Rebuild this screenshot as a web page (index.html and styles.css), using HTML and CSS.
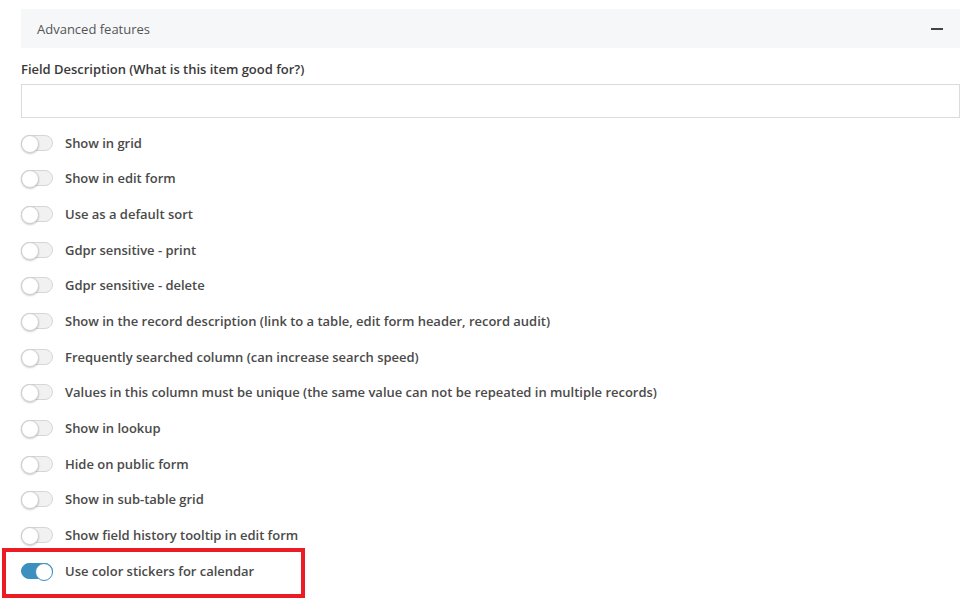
FILE: index.html
```html
<!DOCTYPE html>
<html>
<head>
<meta charset="utf-8">
<link rel="stylesheet" href="styles.css">
</head>
<body>
<div class="page">
  <div class="panel-head">
    <span class="panel-title">Advanced features</span>
    <span class="minus"></span>
  </div>
  <div class="field-label">Field Description (What is this item good for?)</div>
  <div class="input"></div>
  <div class="toggles">
    <div class="row"><span class="switch"></span><span class="label">Show in grid</span></div>
    <div class="row"><span class="switch"></span><span class="label">Show in edit form</span></div>
    <div class="row"><span class="switch"></span><span class="label">Use as a default sort</span></div>
    <div class="row"><span class="switch"></span><span class="label">Gdpr sensitive - print</span></div>
    <div class="row"><span class="switch"></span><span class="label">Gdpr sensitive - delete</span></div>
    <div class="row"><span class="switch"></span><span class="label">Show in the record description (link to a table, edit form header, record audit)</span></div>
    <div class="row"><span class="switch"></span><span class="label">Frequently searched column (can increase search speed)</span></div>
    <div class="row"><span class="switch"></span><span class="label">Values in this column must be unique (the same value can not be repeated in multiple records)</span></div>
    <div class="row"><span class="switch"></span><span class="label">Show in lookup</span></div>
    <div class="row"><span class="switch"></span><span class="label">Hide on public form</span></div>
    <div class="row"><span class="switch"></span><span class="label">Show in sub-table grid</span></div>
    <div class="row"><span class="switch"></span><span class="label">Show field history tooltip in edit form</span></div>
    <div class="row highlighted"><span class="switch on"></span><span class="label">Use color stickers for calendar</span><span class="red-box"></span></div>
  </div>
</div>
</body>
</html>
```
FILE: styles.css
```css
* { box-sizing: border-box; }
html, body { margin: 0; padding: 0; background: #fff; }
body {
  font-family: "Open Sans", "Liberation Sans", sans-serif;
  font-size: 13px;
  color: #444;
  width: 973px;
  height: 601px;
  overflow: hidden;
}
.page {
  padding: 9px 13px 0 21px;
}
.panel-head {
  height: 39px;
  background: #f6f7f9;
  display: flex;
  align-items: center;
  justify-content: space-between;
  padding: 0 17px 0 16px;
}
.panel-title {
  color: #555;
  font-size: 13px;
}
.minus {
  width: 12px;
  height: 2px;
  background: #444;
  margin-top: 1px;
}
.field-label {
  margin-top: 11px;
  font-weight: 600;
  color: #3a3a3a;
  line-height: 20px;
  letter-spacing: -0.02px;
}
.input {
  margin-top: 5px;
  width: 939px;
  height: 34px;
  border: 1px solid #d8dcdf;
  background: #fff;
}
.toggles {
  margin-top: 7px;
  display: flex;
  flex-direction: column;
}
.row {
  height: 35.67px;
  display: flex;
  align-items: center;
  position: relative;
}
.switch {
  position: relative;
  width: 32px;
  height: 16px;
  border-radius: 8px;
  border: 1px solid #d6d6d6;
  background: #f1f1f1;
  flex: none;
}
.switch::after {
  content: "";
  position: absolute;
  left: -1px;
  top: -1px;
  width: 16px;
  height: 16px;
  border-radius: 50%;
  background: #fff;
  border: 1px solid #cfcfcf;
  box-shadow: 0 1px 2px rgba(0,0,0,0.2);
}
.switch.on {
  background: #3d8fbf;
  border-color: #3d8fbf;
}
.switch.on::after {
  left: auto;
  right: -1px;
  border-color: #3d8fbf;
  box-shadow: none;
}
.label {
  margin-left: 12px;
  font-weight: 600;
  color: #4a4a4a;
  white-space: nowrap;
  letter-spacing: -0.02px;
}
.red-box {
  position: absolute;
  left: -19px;
  top: -5px;
  width: 303px;
  height: 50px;
  border: 4px solid #ec1c24;
}
```
